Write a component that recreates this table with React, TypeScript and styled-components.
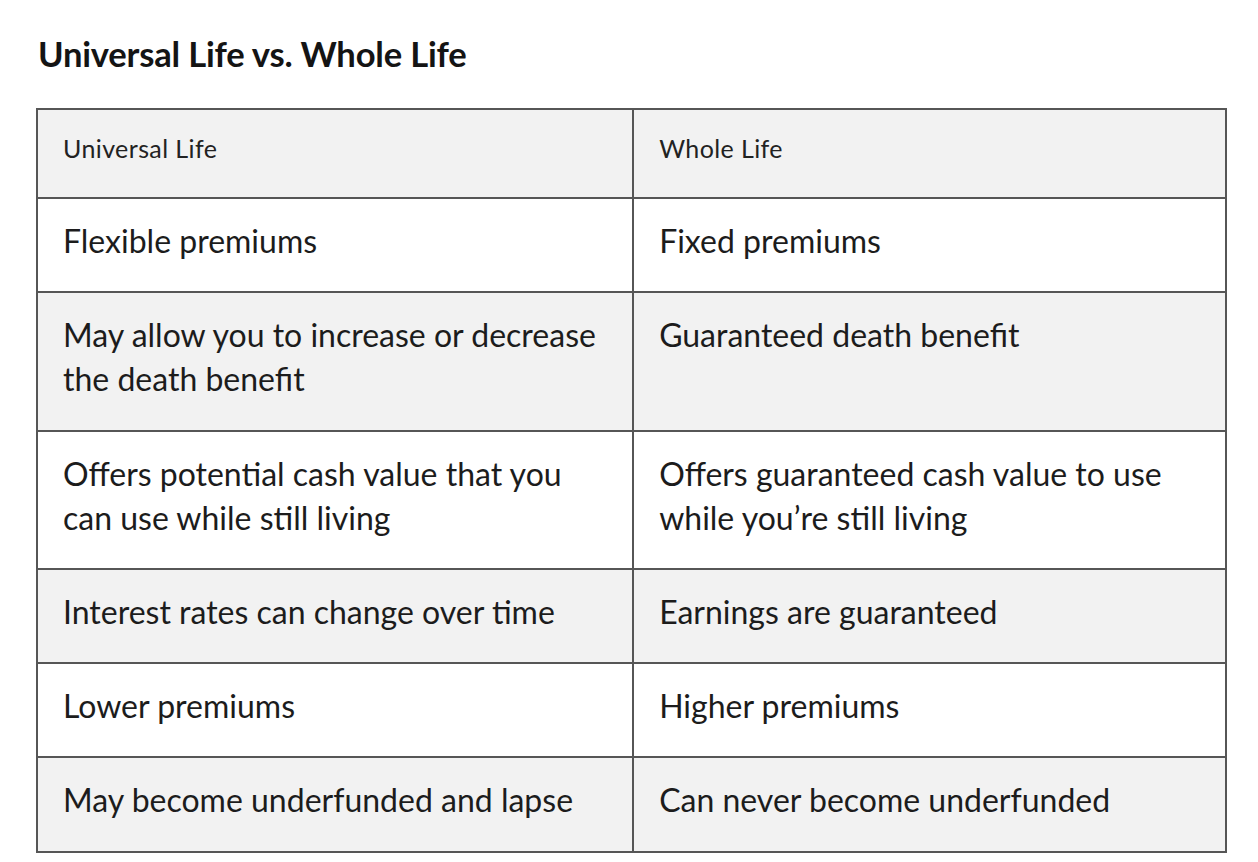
import React from "react";
import styled, { createGlobalStyle } from "styled-components";

const Global = createGlobalStyle`
  html, body { margin: 0; padding: 0; background: #ffffff; }
  body { font-family: Lato, "Open Sans", sans-serif; color: #1c1c1c; }
`;

const Page = styled.main`
  padding: 33px 31px 0 36px;
`;

const Title = styled.h2`
  margin: 0 0 34px 2px;
  font-family: Lato, sans-serif;
  font-weight: 700;
  font-size: 34.6px;
  line-height: 41px;
  color: #141414;
  letter-spacing: -0.2px;
`;

const Table = styled.table`
  width: 100%;
  border-collapse: collapse;
  table-layout: fixed;
  border: 2px solid #565656;
`;

const HeadCell = styled.th<{ $width: string }>`
  width: ${(p) => p.$width};
  text-align: left;
  font-weight: 400;
  font-size: 25px;
  letter-spacing: 0.4px;
  line-height: 33px;
  padding: 22px 25px 32px;
  background: #f2f2f2;
  border: 2px solid #565656;
  color: #222;
`;

const Row = styled.tr<{ $shaded: boolean }>`
  background: ${(p) => (p.$shaded ? "#f2f2f2" : "#ffffff")};
`;

const Cell = styled.td`
  vertical-align: top;
  font-size: 32px;
  line-height: 44px;
  padding: 20px 25px 28.3px;
  border: 2px solid #565656;
  color: #1c1c1c;
`;

const rows: [string, string][] = [
  ["Flexible premiums", "Fixed premiums"],
  ["May allow you to increase or decrease the death benefit", "Guaranteed death benefit"],
  ["Offers potential cash value that you can use while still living", "Offers guaranteed cash value to use while you\u2019re still living"],
  ["Interest rates can change over time", "Earnings are guaranteed"],
  ["Lower premiums", "Higher premiums"],
  ["May become underfunded and lapse", "Can never become underfunded"],
];

export default function App() {
  return (
    <>
      <Global />
      <Page>
        <Title>Universal Life vs. Whole Life</Title>
        <Table>
          <thead>
            <tr>
              <HeadCell $width="50.15%">Universal Life</HeadCell>
              <HeadCell $width="49.85%">Whole Life</HeadCell>
            </tr>
          </thead>
          <tbody>
            {rows.map(([a, b], i) => (
              <Row key={i} $shaded={i % 2 === 1}>
                <Cell>{a}</Cell>
                <Cell>{b}</Cell>
              </Row>
            ))}
          </tbody>
        </Table>
      </Page>
    </>
  );
}
